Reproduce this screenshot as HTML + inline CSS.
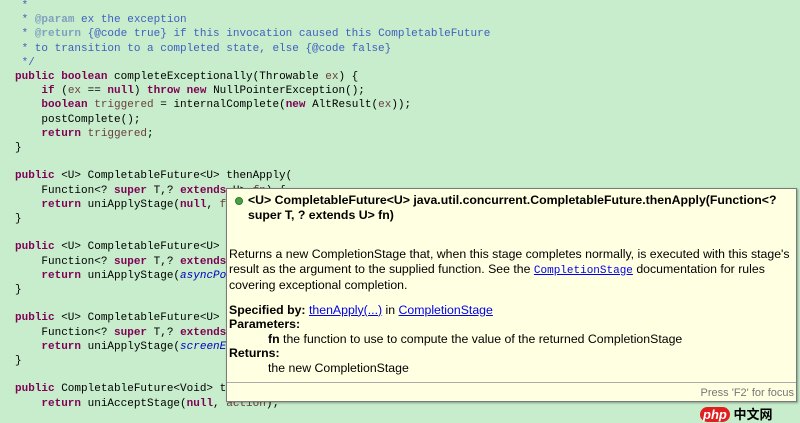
<!DOCTYPE html>
<html><head><meta charset="utf-8"><style>
body{margin:0;width:800px;height:414px;overflow:hidden;background:#c7edcc;position:relative}
pre{margin:0;position:absolute;left:15px;top:-1px;font:11px/14.2px "Liberation Mono",monospace;color:#000;white-space:pre}
.k{color:#7f0055;font-weight:bold}
.c{color:#3f5fbf}.t{color:#7f9fbf;font-weight:bold}
.v{color:#6a3e3e}.f{color:#0000c0;font-style:italic}
#pop{position:absolute;left:226px;top:188px;width:569px;height:212px;background:#ffffe1;border:1px solid #7a7a7a;box-shadow:1px 1px 2px rgba(0,0,0,.35);font:12.3px/14.5px "Liberation Sans",sans-serif;color:#000}
#pop .title{position:absolute;left:21px;top:4px;font-weight:bold;width:545px}
#pop .dot{position:absolute;left:8px;top:8px;width:6px;height:6px;border-radius:50%;background:#4aa04a;border:1px solid #2d7a2d}
#pop .body{position:absolute;left:2px;top:58px;width:566px}
a{color:#0000ee;text-decoration:underline}
.m{font-family:"Liberation Mono",monospace;font-size:11px}
#foot{position:absolute;left:0;right:0;top:193px;border-top:1px solid #aaa;height:18px}
#foot span{position:absolute;right:2px;top:3px;color:#777;font-size:11px}
#wm{position:absolute;left:700px;top:404px;font:bold 13px "Liberation Sans","Noto Sans CJK SC",sans-serif}
#wm b{background:#e02020;color:#fff;border-radius:8px;padding:0 3px;font-style:italic}
</style></head><body>
<pre><span class="c"> *</span>
<span class="c"> * <span class="t">@param</span> ex the exception</span>
<span class="c"> * <span class="t">@return</span> {@code true} if this invocation caused this CompletableFuture</span>
<span class="c"> * to transition to a completed state, else {@code false}</span>
<span class="c"> */</span>
<span class="k">public</span> <span class="k">boolean</span> completeExceptionally(Throwable <span class="v">ex</span>) {
    <span class="k">if</span> (<span class="v">ex</span> == <span class="k">null</span>) <span class="k">throw</span> <span class="k">new</span> NullPointerException();
    <span class="k">boolean</span> <span class="v">triggered</span> = internalComplete(<span class="k">new</span> AltResult(<span class="v">ex</span>));
    postComplete();
    <span class="k">return</span> <span class="v">triggered</span>;
}

<span class="k">public</span> &lt;U&gt; CompletableFuture&lt;U&gt; thenApply(
    Function&lt;? <span class="k">super</span> T,? <span class="k">extends</span> U&gt; <span class="v">fn</span>) {
    <span class="k">return</span> uniApplyStage(<span class="k">null</span>, <span class="v">fn</span>);
}

<span class="k">public</span> &lt;U&gt; CompletableFuture&lt;U&gt; thenApplyAsync(
    Function&lt;? <span class="k">super</span> T,? <span class="k">extends</span> U&gt; <span class="v">fn</span>) {
    <span class="k">return</span> uniApplyStage(<span class="f">asyncPool</span>, <span class="v">fn</span>);
}

<span class="k">public</span> &lt;U&gt; CompletableFuture&lt;U&gt; thenApplyAsync(
    Function&lt;? <span class="k">super</span> T,? <span class="k">extends</span> U&gt; <span class="v">fn</span>, Executor <span class="v">executor</span>) {
    <span class="k">return</span> uniApplyStage(<span class="f">screenExecutor</span>(<span class="v">executor</span>), <span class="v">fn</span>);
}

<span class="k">public</span> CompletableFuture&lt;Void&gt; thenAccept(Consumer&lt;? <span class="k">super</span> T&gt; <span class="v">action</span>) {
    <span class="k">return</span> uniAcceptStage(<span class="k">null</span>, <span class="v">action</span>);
</pre>
<div id="pop">
<div class="dot"></div>
<div class="title">&lt;U&gt; CompletableFuture&lt;U&gt; java.util.concurrent.CompletableFuture.thenApply(Function&lt;? super T, ? extends U&gt; fn)</div>
<div class="body">Returns a new CompletionStage that, when this stage completes normally, is executed with this stage's result as the argument to the supplied function. See the <a class="m">CompletionStage</a> documentation for rules covering exceptional completion.
<div style="margin-top:10px"><b>Specified by:</b> <a>thenApply(...)</a> in <a>CompletionStage</a></div>
<div><b>Parameters:</b></div>
<div style="padding-left:39px"><b>fn</b> the function to use to compute the value of the returned CompletionStage</div>
<div><b>Returns:</b></div>
<div style="padding-left:39px">the new CompletionStage</div>
</div>
<div id="foot"><span>Press 'F2' for focus</span></div>
</div>
<div id="wm"><b>php</b> 中文网</div>
</body></html>
